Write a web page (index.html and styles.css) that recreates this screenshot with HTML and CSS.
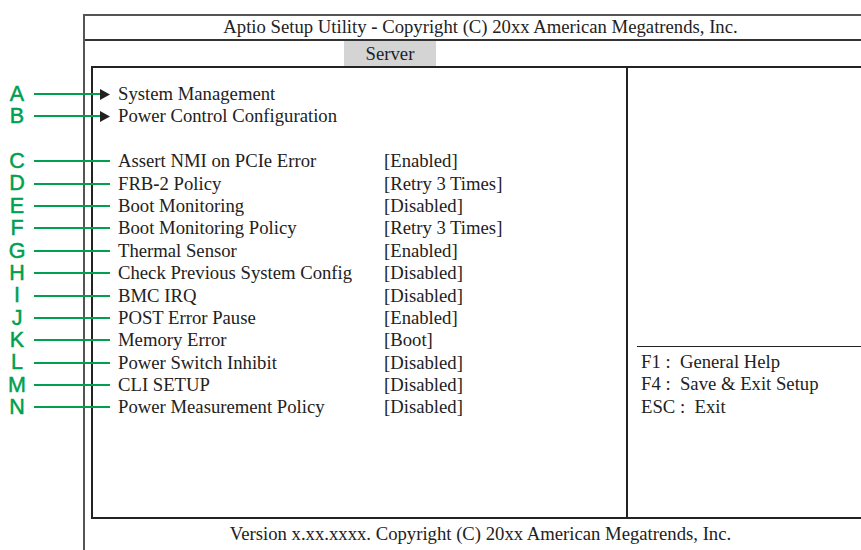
FILE: index.html
```html
<!DOCTYPE html>
<html lang="en">
<head>
    <meta charset="UTF-8" />
    <title>Aptio Setup Utility - Server</title>
    <link rel="stylesheet" href="styles.css">
</head>
<body>

<div class="screen">
    <div class="frame">
        <div class="title">Aptio Setup Utility <b class="dash">-</b> Copyright (C) 20xx American Megatrends, Inc.</div>
        <div class="tabs">
            <span class="tab active">Server</span>
        </div>

        <div class="panel">
            <div class="main">
                <div class="row"><span class="arrow"><svg width="10" height="11" viewBox="0 0 10 11"><path d="M0 0 L10 5.5 L0 11 Z" fill="#222"/></svg></span><span class="name">System Management</span></div>
                <div class="row"><span class="arrow"><svg width="10" height="11" viewBox="0 0 10 11"><path d="M0 0 L10 5.5 L0 11 Z" fill="#222"/></svg></span><span class="name">Power Control Configuration</span></div>
                <div class="row"></div>
                <div class="row"><span></span><span class="name">Assert NMI on PCIe Error</span><span class="value">[Enabled]</span></div>
                <div class="row"><span></span><span class="name">FRB<b class="dash">-</b>2 Policy</span><span class="value">[Retry 3 Times]</span></div>
                <div class="row"><span></span><span class="name">Boot Monitoring</span><span class="value">[Disabled]</span></div>
                <div class="row"><span></span><span class="name">Boot Monitoring Policy</span><span class="value">[Retry 3 Times]</span></div>
                <div class="row"><span></span><span class="name">Thermal Sensor</span><span class="value">[Enabled]</span></div>
                <div class="row"><span></span><span class="name">Check Previous System Config</span><span class="value">[Disabled]</span></div>
                <div class="row"><span></span><span class="name">BMC IRQ</span><span class="value">[Disabled]</span></div>
                <div class="row"><span></span><span class="name">POST Error Pause</span><span class="value">[Enabled]</span></div>
                <div class="row"><span></span><span class="name">Memory Error</span><span class="value">[Boot]</span></div>
                <div class="row"><span></span><span class="name">Power Switch Inhibit</span><span class="value">[Disabled]</span></div>
                <div class="row"><span></span><span class="name">CLI SETUP</span><span class="value">[Disabled]</span></div>
                <div class="row"><span></span><span class="name">Power Measurement Policy</span><span class="value">[Disabled]</span></div>
            </div>
            <div class="side">
                <div class="help">
                    <div class="key-row">F1 :&nbsp; General Help</div>
                    <div class="key-row">F4 :&nbsp; Save &amp; Exit Setup</div>
                    <div class="key-row">ESC :&nbsp; Exit</div>
                </div>
            </div>
        </div>

        <div class="footer">Version x.xx.xxxx. Copyright (C) 20xx American Megatrends, Inc.</div>
    </div>

    <!-- callout letters drawn over the screen -->
    <div class="callouts">
        <div class="callout"><span class="letter">A</span><span class="line short"></span></div>
        <div class="callout"><span class="letter">B</span><span class="line short"></span></div>
        <div class="callout"></div>
        <div class="callout"><span class="letter">C</span><span class="line"></span></div>
        <div class="callout"><span class="letter">D</span><span class="line"></span></div>
        <div class="callout"><span class="letter">E</span><span class="line"></span></div>
        <div class="callout"><span class="letter">F</span><span class="line"></span></div>
        <div class="callout"><span class="letter">G</span><span class="line"></span></div>
        <div class="callout"><span class="letter">H</span><span class="line"></span></div>
        <div class="callout"><span class="letter">I</span><span class="line"></span></div>
        <div class="callout"><span class="letter">J</span><span class="line"></span></div>
        <div class="callout"><span class="letter">K</span><span class="line"></span></div>
        <div class="callout"><span class="letter">L</span><span class="line"></span></div>
        <div class="callout"><span class="letter">M</span><span class="line"></span></div>
        <div class="callout"><span class="letter">N</span><span class="line"></span></div>
    </div>
</div>

</body>
</html>
```

FILE: styles.css
```css
html, body {
    margin: 0;
    padding: 0;
    background: #fff;
    overflow: hidden;
}
body {
    font-family: "Liberation Serif", "Times New Roman", serif;
    font-size: 18.7px;
    color: #222;
}
.screen {
    position: relative;
    width: 861px;
    height: 550px;
    overflow: hidden;
}
.frame {
    margin: 14px 0 0 83px;
    width: 791px;
    height: 600px;
    border-top: 2px solid #555;
    border-left: 2px solid #555;
}
.title {
    height: 23px;
    line-height: 22px;
    text-align: center;
    border-bottom: 2px solid #333;
}
.dash {
    font-weight: bold;
}
.tabs {
    height: 25px;
    display: flex;
}
.tab {
    display: block;
    width: 92px;
    line-height: 25px;
    text-align: center;
}
.tab.active {
    margin-left: 259px;
    background: #d4d4d4;
}
.panel {
    margin-left: 6px;
    width: 771px;
    height: 449px;
    border: 2px solid #222;
    display: flex;
}
.main {
    width: 533px;
    border-right: 2px solid #222;
    padding-top: 15px;
}
.row {
    display: grid;
    grid-template-columns: 25px 266px auto;
    height: 22.4px;
    line-height: 22.4px;
    white-space: nowrap;
}
.arrow {
    display: flex;
    align-items: center;
    padding-left: 7px;
}
.arrow svg {
    display: block;
}
.side {
    flex: 1;
    padding: 278px 0 0 9px;
}
.help {
    border-top: 1.5px solid #222;
    padding: 4px 0 0 4px;
}
.key-row {
    height: 22.4px;
    line-height: 22.4px;
    white-space: nowrap;
}
.footer {
    height: 30px;
    line-height: 30px;
    text-align: center;
}
.callouts {
    position: absolute;
    top: 0;
    left: 0;
    padding-top: 82.8px;
}
.callout {
    display: flex;
    align-items: center;
    height: 22.4px;
}
.letter {
    width: 34px;
    height: 22.4px;
    line-height: 22.4px;
    overflow: hidden;
    text-align: center;
    font-family: "Liberation Sans", Arial, sans-serif;
    font-size: 21.5px;
    color: #00a04f;
    -webkit-text-stroke: 0.5px #00a04f;
}
.line {
    display: block;
    width: 76px;
    height: 2px;
    background: #00a04f;
}
.line.short {
    width: 66px;
}
```
